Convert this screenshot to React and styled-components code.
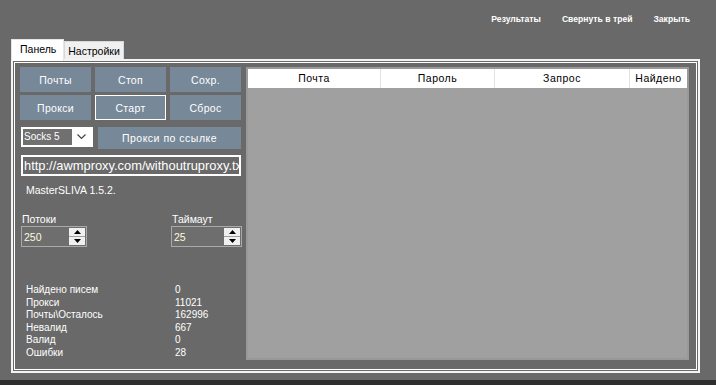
import React from 'react'
import styled, { createGlobalStyle, css } from 'styled-components'

const Global = createGlobalStyle`
  html, body {
    margin: 0;
    padding: 0;
    background: #696969;
  }
  body {
    font-family: "Liberation Sans", Arial, sans-serif;
  }
`

const Window = styled.div`
  width: 716px;
  height: 385px;
  display: flex;
  flex-direction: column;
  background: #696969;
  overflow: hidden;
`

const TopBar = styled.div`
  height: 39px;
  display: flex;
  justify-content: flex-end;
  align-items: center;
  gap: 21px;
  padding-right: 26px;
  box-sizing: border-box;
  padding-bottom: 1px;
`

const TopLink = styled.span`
  color: #fff;
  font-size: 8.6px;
  font-weight: bold;
  cursor: pointer;
`

const TabArea = styled.div`
  margin-left: 11px;
  width: 689px;
  display: flex;
  flex-direction: column;
`

const TabStrip = styled.div`
  display: flex;
  align-items: flex-end;
  height: 20px;
  position: relative;
  z-index: 1;
`

const Tab = styled.div`
  box-sizing: border-box;
  height: 18px;
  padding: 0 3px;
  font-size: 10.5px;
  color: #000;
  background: #f0f0f0;
  border: 1px solid #d9d9d9;
  border-bottom: none;
  display: flex;
  align-items: center;
  ${p => p.active && css`
    height: 22px;
    margin-bottom: -2px;
    background: #fff;
    border-color: #e6e6e6;
    padding: 0 7px 3px 8px;
  `}
`

const Panel = styled.div`
  box-sizing: border-box;
  height: 314px;
  border: 2px solid #f4f4f4;
  box-shadow: inset 0 0 0 1px #696969, inset 0 0 0 2px #fff;
  padding: 6px 9px 9px 7px;
  display: flex;
  gap: 4px;
`

const LeftCol = styled.div`
  width: 222px;
  display: flex;
  flex-direction: column;
`

const ButtonGrid = styled.div`
  display: grid;
  grid-template-columns: repeat(3, 71px);
  grid-auto-rows: 25px;
  gap: 3px 4px;
`

const Btn = styled.button`
  box-sizing: border-box;
  background: #778899;
  color: #fff;
  border: 1px solid #778899;
  font-family: "Liberation Sans", Arial, sans-serif;
  font-size: 10.5px;
  letter-spacing: 0.3px;
  padding: 0;
  cursor: pointer;
  outline: none;
  ${p => p.focused && css`
    border-color: #fff;
  `}
  ${p => p.wide && css`
    width: 143px;
    height: 22px;
    letter-spacing: 0.5px;
  `}
`

const ProxyRow = styled.div`
  display: flex;
  align-items: flex-start;
  gap: 5px;
  margin-top: 7px;
  padding-left: 1px;
`

const Combo = styled.div`
  box-sizing: border-box;
  width: 72px;
  height: 20px;
  background: #fff;
  border: 2px solid #fff;
  display: flex;
`

const ComboText = styled.div`
  flex: 1;
  background: #707070;
  color: #fff;
  font-size: 10px;
  line-height: 16px;
  padding-left: 1px;
`

const ComboArrow = styled.div`
  width: 19px;
  display: flex;
  align-items: center;
  justify-content: center;
`

const UrlBox = styled.div`
  box-sizing: border-box;
  margin: 6px 0 0 1px;
  width: 220px;
  height: 21px;
  border: 2px solid #fff;
  background: #696969;
  color: #fff;
  font-size: 12.9px;
  line-height: 17px;
  padding-left: 1px;
  white-space: nowrap;
  overflow: hidden;
`

const Version = styled.div`
  color: #fff;
  font-size: 10.5px;
  margin: 8px 0 0 6px;
`

const SpinRow = styled.div`
  display: flex;
  justify-content: space-between;
  margin-top: 17px;
  padding-left: 1px;
`

const SpinGroup = styled.div`
  display: flex;
  flex-direction: column;
  gap: 1px;
`

const SpinLabel = styled.div`
  color: #fff;
  font-size: 10.5px;
  padding-left: 1px;
`

const SpinBox = styled.div`
  box-sizing: border-box;
  width: ${p => p.w}px;
  height: 21px;
  border: 1px solid #a9a9a9;
  background: #6e6e6e;
  display: flex;
  align-items: center;
  justify-content: space-between;
  padding: 1px;
`

const SpinValue = styled.span`
  color: #fff8dc;
  font-size: 10.5px;
  padding-left: 1px;
`

const SpinButtons = styled.div`
  width: 16px;
  height: 17px;
  display: flex;
  flex-direction: column;
  gap: 1px;
  background: #a0a0a0;
`

const SpinHalf = styled.div`
  flex: 1;
  background: #f0f0f0;
  display: flex;
  align-items: center;
  justify-content: center;
`

const Stats = styled.div`
  margin: 37px 0 0 6px;
  display: grid;
  grid-template-columns: 149px 1fr;
  grid-auto-rows: 12.6px;
  color: #fff;
  font-size: 10px;
  line-height: 12.6px;
`

const Table = styled.div`
  flex: 1;
  box-sizing: border-box;
  border: 2px solid #999;
  background: #a0a0a0;
  margin-bottom: 2px;
  display: flex;
  flex-direction: column;
`

const HeaderRow = styled.div`
  display: flex;
  height: 19px;
  background: #fff;
`

const HeadCell = styled.div`
  box-sizing: border-box;
  width: ${p => p.w}px;
  border-right: 1px solid #e3e3e3;
  font-size: 10.5px;
  color: #000;
  text-align: center;
  line-height: 19px;
  letter-spacing: 0.5px;
  &:last-child { border-right: none; }
`

const BottomEdge = styled.div`
  margin-top: auto;
  height: 5px;
  background: #2e2e2e;
`

const Tri = ({ up }) => (
  <svg width="7" height="4" viewBox="0 0 7 4">
    <polygon points={up ? '3.5,0 7,4 0,4' : '0,0 7,0 3.5,4'} fill="#000" />
  </svg>
)

const Spinner = ({ label, value, w }) => (
  <SpinGroup>
    <SpinLabel>{label}</SpinLabel>
    <SpinBox w={w}>
      <SpinValue>{value}</SpinValue>
      <SpinButtons>
        <SpinHalf><Tri up /></SpinHalf>
        <SpinHalf><Tri /></SpinHalf>
      </SpinButtons>
    </SpinBox>
  </SpinGroup>
)

const stats = [
  ['Найдено писем', '0'],
  ['Прокси', '11021'],
  ['Почты\\Осталось', '162996'],
  ['Невалид', '667'],
  ['Валид', '0'],
  ['Ошибки', '28'],
]

const columns = [
  ['Почта', 133],
  ['Пароль', 114],
  ['Запрос', 135],
  ['Найдено', 57],
]

export default function App() {
  return (
    <Window>
      <Global />
      <TopBar>
        <TopLink>Результаты</TopLink>
        <TopLink>Свернуть в трей</TopLink>
        <TopLink>Закрыть</TopLink>
      </TopBar>
      <TabArea>
        <TabStrip>
          <Tab active>Панель</Tab>
          <Tab>Настройки</Tab>
        </TabStrip>
        <Panel>
          <LeftCol>
            <ButtonGrid>
              <Btn>Почты</Btn>
              <Btn>Стоп</Btn>
              <Btn>Сохр.</Btn>
              <Btn>Прокси</Btn>
              <Btn focused>Старт</Btn>
              <Btn>Сброс</Btn>
            </ButtonGrid>
            <ProxyRow>
              <Combo>
                <ComboText>Socks 5</ComboText>
                <ComboArrow>
                  <svg width="9" height="6" viewBox="0 0 9 6">
                    <polyline points="0.5,0.5 4.5,4.5 8.5,0.5" fill="none" stroke="#444" strokeWidth="1.2" />
                  </svg>
                </ComboArrow>
              </Combo>
              <Btn wide>Прокси по ссылке</Btn>
            </ProxyRow>
            <UrlBox>http://awmproxy.com/withoutruproxy.txt</UrlBox>
            <Version>MasterSLIVA 1.5.2.</Version>
            <SpinRow>
              <Spinner label="Потоки" value="250" w={66} />
              <Spinner label="Таймаут" value="25" w={71} />
            </SpinRow>
            <Stats>
              {stats.map(([k, v]) => (
                <React.Fragment key={k}>
                  <span>{k}</span>
                  <span>{v}</span>
                </React.Fragment>
              ))}
            </Stats>
          </LeftCol>
          <Table>
            <HeaderRow>
              {columns.map(([name, w]) => (
                <HeadCell key={name} w={w}>{name}</HeadCell>
              ))}
            </HeaderRow>
          </Table>
        </Panel>
      </TabArea>
      <BottomEdge />
    </Window>
  )
}
